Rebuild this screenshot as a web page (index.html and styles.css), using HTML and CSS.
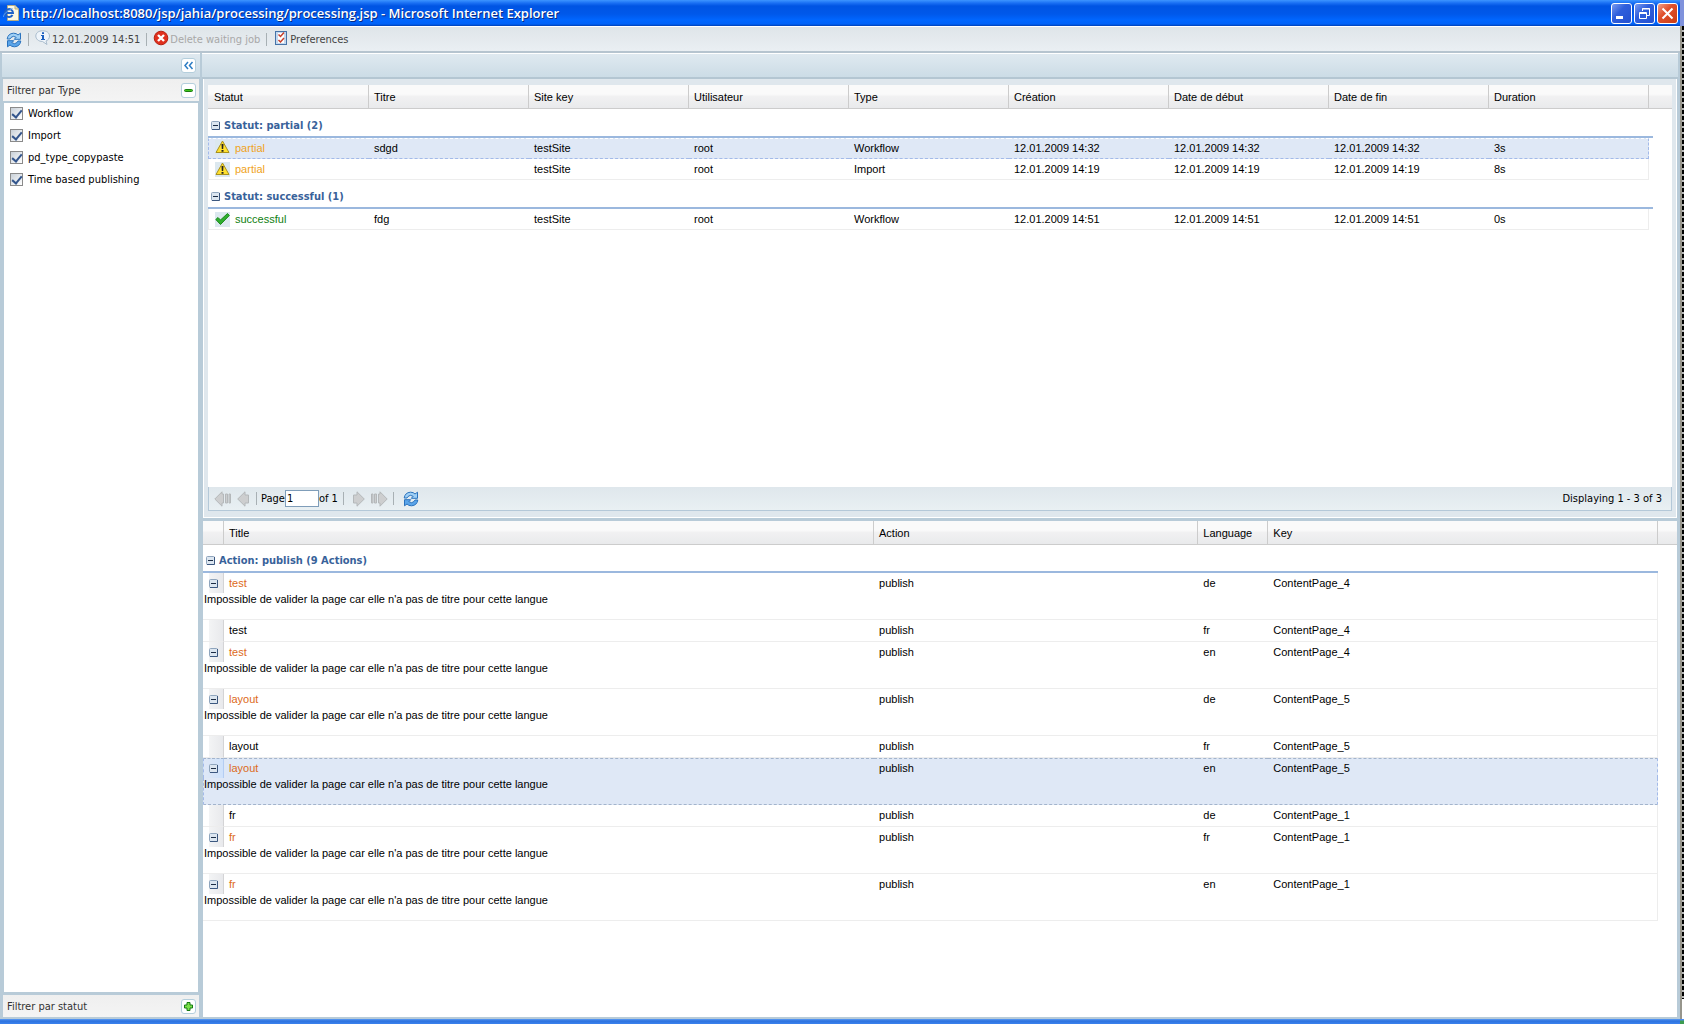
FILE: index.html
```html
<!DOCTYPE html>
<html lang="fr">
<head>
<meta charset="utf-8">
<title>Processing</title>
<link rel="stylesheet" href="styles.css">
</head>
<body>
<svg class="defs" aria-hidden="true">
  <symbol id="refresh" viewBox="0 0 16 16">
    <path d="M1.200 7 Q2 1.500 7.500 1.200 Q10.500 1.200 12 3 L14.500 1.200 V7.300 H8.300 L10.200 5.300 Q7 3.200 5 5.500 L4 7 Z" fill="#9fd0f6" stroke="#2a72bd"/>
    <path d="M14.800 9 Q14 14.500 8.500 14.800 Q5.500 14.800 4 13 L1.500 14.800 V8.700 H7.700 L5.800 10.700 Q9 12.800 11 10.500 L12 9 Z" fill="#5aa5ea" stroke="#2a72bd"/>
  </symbol>
  <symbol id="warn" viewBox="0 0 15 15">
    <path d="M7.500 1 L14 12.500 H1 Z" fill="#ffe02e" stroke="#a8901c" stroke-linejoin="round"/>
    <path d="M6.500 4 H8.500 L8.200 9 H6.800 Z M6.500 10 H8.500 V11.800 H6.500 Z" fill="#222"/>
  </symbol>
  <symbol id="check" viewBox="0 0 15 15">
    <path d="M.8 7.500 L3 5.500 L5.500 8 L12.500 1.500 L14.300 3.500 L5.500 12.500 Z" fill="#2fae2f" stroke="#1a8a1a" stroke-linejoin="round"/>
  </symbol>
  <symbol id="minus" viewBox="0 0 9 9">
    <rect x=".5" y=".5" width="8" height="8" rx="1" fill="#dce6f0" stroke="#8fa5bd"/>
    <path d="M1 8.500 H8.500 V1" fill="none" stroke="#3c5880"/>
    <path d="M2 4.500 H7" stroke="#1c2c44"/>
  </symbol>
  <symbol id="arrow" viewBox="0 0 12 16">
    <path d="M.5 4 H4 V.8 L11.300 8 L4 15.200 V12 H.5 Z" fill="#cdcecf" stroke="#b4b8ba"/>
  </symbol>
  <symbol id="arrow-end" viewBox="0 0 17 16">
    <path d="M.5 3 H2 V12 H.5 Z M3.500 3 H5.500 V12 H3.500 Z M7.500 3 H9 V.8 L16.200 8 L9 15.200 V12 H7.500 Z" fill="#cdcecf" stroke="#b4b8ba"/>
  </symbol>
</svg>
<div class="screen">
  <div class="window">
    <header class="titlebar">
      <svg class="ie" width="16" height="16" viewBox="0 0 16 16"><path d="M4.500 .5 H12 L15.500 4 V15.500 H4.500 Z" fill="#fbf8e4" stroke="#b8ad84"/><path d="M12 .5 V4 H15.500" fill="#e4dcb4" stroke="#b8ad84"/><path d="M9.500 10 A4 4 0 1 1 10 8 H3.500" fill="none" stroke="#1f62c8" stroke-width="2"/><path d="M.5 12 Q0 8 9.500 3.500" fill="none" stroke="#5a9cf0"/></svg>
      <h1>http://localhost:8080/jsp/jahia/processing/processing.jsp - Microsoft Internet Explorer</h1>
      <div class="winbtns">
        <button class="wb" aria-label="Minimize"><svg width="19" height="19"><path d="M4 13.500 H11" stroke="#fff" stroke-width="3"/></svg></button>
        <button class="wb" aria-label="Restore"><svg width="19" height="19" fill="none" stroke="#fff"><path d="M7.500 7 V4.500 H14.500 V11.500 H12 M7 5 H15 M4.500 8.500 H11.500 V14.500 H4.500 Z M4 9.500 H12"/></svg></button>
        <button class="wb close" aria-label="Close"><svg width="19" height="19"><path d="M4.500 4.500 L14.500 14.500 M14.500 4.500 L4.500 14.500" stroke="#fff" stroke-width="2"/></svg></button>
      </div>
    </header>
    <nav class="toolbar">
      <button class="tb" aria-label="Refresh"><svg width="16" height="16"><use href="#refresh"/></svg></button>
      <i class="sep"></i>
      <button class="tb"><svg class="up" width="16" height="16" viewBox="0 0 16 16"><path d="M7.500 .8 C12 .8 14.500 3 14.500 6 C14.500 8.500 13 10.300 11 11 L12 14.500 L7.500 11.500 C3.500 11.500 .8 9 .8 6 C.8 3 3.500 .8 7.500 .8 Z" fill="#eef4fa" stroke="#a9bccd"/><path d="M7 2.300 H9 V4 H7 Z M6 5 H9 V9 H10 V10 H6 V9 H7 V6 H6 Z" fill="#1c5fc0"/></svg>12.01.2009 14:51</button>
      <i class="sep"></i>
      <button class="tb off" disabled><svg class="up" width="16" height="16" viewBox="0 0 16 16"><circle cx="8" cy="8" r="6.800" fill="#e0301e" stroke="#b52212"/><path d="M5 5 L11 11 M11 5 L5 11" stroke="#fff" stroke-width="2.400"/></svg>Delete waiting job</button>
      <i class="sep"></i>
      <button class="tb"><svg class="up" width="16" height="16" viewBox="0 0 16 16"><rect x="2.500" y="1.500" width="11" height="13" fill="#c4d8ee" stroke="#4673a8"/><rect x="5" y="3" width="6" height="10" fill="#fff"/><path d="M5.500 4.500 L7.500 6.500 L11 2.500 M5.500 10 L7.500 12 L11 8" fill="none" stroke="#c6402c" stroke-width="1.500"/></svg>Preferences</button>
    </nav>
    <div class="workspace">
      <aside class="side">
        <div class="strip"><button class="tool" aria-label="Collapse"><svg width="13" height="13" fill="none" stroke="#2b7cc4" stroke-width="1.500"><path d="M6 3 L3 6.500 L6 10 M10.500 3 L7.500 6.500 L10.500 10"/></svg></button></div>
        <div class="sidebody">
          <div class="acc"><h2>Filtrer par Type</h2><button class="tool" aria-label="Collapse"><svg width="13" height="13"><rect x="2.500" y="5.500" width="8" height="2" rx="1" fill="#3fc41c" stroke="#1a7d10"/></svg></button></div>
          <form class="filters">
            <label><input type="checkbox" checked>Workflow</label>
            <label><input type="checkbox" checked>Import</label>
            <label><input type="checkbox" checked>pd_type_copypaste</label>
            <label><input type="checkbox" checked>Time based publishing</label>
          </form>
          <div class="acc"><h2>Filtrer par statut</h2><button class="tool" aria-label="Expand"><svg width="13" height="13"><path d="M5 2.500 H8 V5 H10.500 V8 H8 V10.500 H5 V8 H2.500 V5 H5 Z" fill="#7be04a" stroke="#157a10"/></svg></button></div>
        </div>
      </aside>
      <main class="main">
        <div class="strip"></div>
        <div class="panels">
          <section class="upper">
            <div class="scroll">
              <table class="grid jobs">
                <colgroup><col class="c-first"><col span="8"><col class="c-fill"></colgroup>
                <thead><tr><th>Statut</th><th>Titre</th><th>Site key</th><th>Utilisateur</th><th>Type</th><th>Création</th><th>Date de début</th><th>Date de fin</th><th>Duration</th><td class="fill"></td></tr></thead>
                <tbody>
                  <tr class="group"><th colspan="10"><div><svg width="9" height="9"><use href="#minus"/></svg>Statut: partial (2)</div></th></tr>
                  <tr class="row sel"><td class="partial"><span><svg width="15" height="15"><use href="#warn"/></svg>partial</span></td><td>sdgd</td><td>testSite</td><td>root</td><td>Workflow</td><td>12.01.2009 14:32</td><td>12.01.2009 14:32</td><td>12.01.2009 14:32</td><td>3s</td></tr>
                  <tr class="row"><td class="partial"><span><svg width="15" height="15"><use href="#warn"/></svg>partial</span></td><td></td><td>testSite</td><td>root</td><td>Import</td><td>12.01.2009 14:19</td><td>12.01.2009 14:19</td><td>12.01.2009 14:19</td><td>8s</td></tr>
                </tbody>
                <tbody>
                  <tr class="group"><th colspan="10"><div><svg width="9" height="9"><use href="#minus"/></svg>Statut: successful (1)</div></th></tr>
                  <tr class="row"><td class="ok"><span><svg width="15" height="15"><use href="#check"/></svg>successful</span></td><td>fdg</td><td>testSite</td><td>root</td><td>Workflow</td><td>12.01.2009 14:51</td><td>12.01.2009 14:51</td><td>12.01.2009 14:51</td><td>0s</td></tr>
                </tbody>
              </table>
            </div>
            <div class="pager">
              <button class="pg flip" aria-label="First page" disabled><svg width="17" height="16"><use href="#arrow-end"/></svg></button>
              <button class="pg flip" aria-label="Previous page" disabled><svg width="12" height="16"><use href="#arrow"/></svg></button>
              <i class="sep"></i>
              <label>Page<input type="text" value="1"></label><span>of 1</span>
              <i class="sep near"></i>
              <button class="pg" aria-label="Next page" disabled><svg width="12" height="16"><use href="#arrow"/></svg></button>
              <button class="pg" aria-label="Last page" disabled><svg width="17" height="16"><use href="#arrow-end"/></svg></button>
              <i class="sep near"></i>
              <button class="pg" aria-label="Refresh"><svg width="16" height="16"><use href="#refresh"/></svg></button>
              <output>Displaying 1 - 3 of 3</output>
            </div>
          </section>
          <section class="lower">
            <table class="grid actions">
              <colgroup><col class="c-exp"><col class="c-title"><col class="c-action"><col class="c-lang"><col><col class="c-end"></colgroup>
              <thead><tr><th></th><th>Title</th><th>Action</th><th>Language</th><th>Key</th><td class="fill"></td></tr></thead>
              <tbody>
                <tr class="group"><th colspan="5"><div><svg width="9" height="9"><use href="#minus"/></svg>Action: publish (9 Actions)</div></th></tr>
                <tr class="top"><td class="exp"><svg width="9" height="9"><use href="#minus"/></svg></td><td class="err">test</td><td>publish</td><td>de</td><td>ContentPage_4</td></tr>
                <tr class="msg"><td colspan="5">Impossible de valider la page car elle n'a pas de titre pour cette langue</td></tr>
                <tr class="plain"><td class="exp"></td><td>test</td><td>publish</td><td>fr</td><td>ContentPage_4</td></tr>
                <tr class="top"><td class="exp"><svg width="9" height="9"><use href="#minus"/></svg></td><td class="err">test</td><td>publish</td><td>en</td><td>ContentPage_4</td></tr>
                <tr class="msg"><td colspan="5">Impossible de valider la page car elle n'a pas de titre pour cette langue</td></tr>
                <tr class="top"><td class="exp"><svg width="9" height="9"><use href="#minus"/></svg></td><td class="err">layout</td><td>publish</td><td>de</td><td>ContentPage_5</td></tr>
                <tr class="msg"><td colspan="5">Impossible de valider la page car elle n'a pas de titre pour cette langue</td></tr>
                <tr class="plain"><td class="exp"></td><td>layout</td><td>publish</td><td>fr</td><td>ContentPage_5</td></tr>
                <tr class="top sel"><td class="exp"><svg width="9" height="9"><use href="#minus"/></svg></td><td class="err">layout</td><td>publish</td><td>en</td><td>ContentPage_5</td></tr>
                <tr class="msg sel"><td colspan="5">Impossible de valider la page car elle n'a pas de titre pour cette langue</td></tr>
                <tr class="plain"><td class="exp"></td><td>fr</td><td>publish</td><td>de</td><td>ContentPage_1</td></tr>
                <tr class="top"><td class="exp"><svg width="9" height="9"><use href="#minus"/></svg></td><td class="err">fr</td><td>publish</td><td>fr</td><td>ContentPage_1</td></tr>
                <tr class="msg"><td colspan="5">Impossible de valider la page car elle n'a pas de titre pour cette langue</td></tr>
                <tr class="top"><td class="exp"><svg width="9" height="9"><use href="#minus"/></svg></td><td class="err">fr</td><td>publish</td><td>en</td><td>ContentPage_1</td></tr>
                <tr class="msg"><td colspan="5">Impossible de valider la page car elle n'a pas de titre pour cette langue</td></tr>
              </tbody>
            </table>
          </section>
        </div>
      </main>
    </div>
  </div>
  <div class="behind"><div class="b-title"></div><div class="b-dots"></div><div class="b-corner"></div></div>
  <div class="taskbar"></div><div class="taskbar tray"></div>
</div>
</body>
</html>
```
FILE: styles.css
```css
:root {
  --frame: #b8cbd8;
  --ui: "DejaVu Sans Condensed", "Noto Sans", sans-serif;
}
* { box-sizing: border-box; }
body {
  margin: 0;
  background: var(--frame);
  font: 11px/14px "Liberation Sans", Arial, sans-serif;
  color: #000;
}
button { border: 0; padding: 0; background: none; font: inherit; color: inherit; }
svg { display: block; flex: none; }
.defs { display: none; }

.screen {
  display: grid;
  grid-template-columns: minmax(0, 1fr) 4px;
  grid-template-rows: minmax(0, 1fr) 5px;
  height: 100vh;
}
.window { display: flex; flex-direction: column; min-height: 0; }
.taskbar { background: linear-gradient(#5c9cf4, #2d72de 2px, #3a82ee); }
.taskbar.tray { background: linear-gradient(#4a8cf0 1px, #3d9c50 2px); }

/* title bar */
.titlebar {
  display: flex;
  align-items: center;
  gap: 3px;
  height: 26px;
  padding: 0 2px 0 3px;
  background: linear-gradient(#3d95ff, #1a70f4 3px, #0054e3 6px, #0058ea 14px, #0066ff 20px, #0062f8 24px, #003fb4);
}
.titlebar h1 {
  flex: 1;
  margin: 0;
  font: 600 13px/18px "Open Sans", "Noto Sans", sans-serif;
  color: #fff;
  text-shadow: 1px 1px #0a2a80;
  white-space: nowrap;
}
.winbtns { display: flex; gap: 2px; }
.wb {
  width: 21px;
  height: 21px;
  border: 1px solid #fff;
  border-radius: 3px;
  background: linear-gradient(135deg, #7c9cf0, #2f5fdc 40%, #2450d0);
}
.wb.close { background: linear-gradient(135deg, #f0a088, #e0502c 40%, #c83c14); }

/* toolbar */
.toolbar {
  display: flex;
  align-items: center;
  height: 27px;
  padding: 1px 6px 0;
  background: linear-gradient(#dfe5e9, #eaeff3);
  border-top: 1px solid #fff;
  border-bottom: 2px solid #b6c4cf;
  font-family: var(--ui);
  color: #444;
}
.tb { display: flex; align-items: center; gap: 1px; }
.tb .up { margin-bottom: 4px; }
.tb.off { color: #a8a8a8; }
.sep { width: 1px; height: 13px; margin: 0 6px; background: #a8b0b4; }

/* workspace */
.workspace {
  flex: 1;
  display: grid;
  grid-template-columns: 198px minmax(0, 1fr);
  gap: 2px;
  min-height: 0;
  padding: 0 2px;
}
.side, .main { display: flex; flex-direction: column; min-width: 0; min-height: 0; }
.strip {
  display: flex;
  flex: none;
  justify-content: flex-end;
  align-items: center;
  height: 26px;
  padding-right: 4px;
  background: linear-gradient(#dfe9f0, #ccdce6);
  border-top: 1px solid #fff;
  border-bottom: 2px solid #b4c6d2;
}
.tool {
  display: grid;
  place-items: center;
  width: 15px;
  height: 15px;
  border: 1px solid #b4cedc;
  border-radius: 3px;
  background: #fff;
}
.sidebody {
  flex: 1;
  display: flex;
  flex-direction: column;
  padding: 0 1px 2px;
}
.acc {
  display: flex;
  justify-content: space-between;
  align-items: center;
  height: 22px;
  padding: 0 3px 0 4px;
  background: linear-gradient(#efefef, #f4f4f4);
}
.acc h2 { margin: 0; padding-top: 2px; font: 11px/14px var(--ui); color: #333; }
.filters {
  flex: 1;
  margin: 2px 1px 3px;
  background: #fff;
  font-family: var(--ui);
}
.filters label {
  display: flex;
  align-items: center;
  gap: 5px;
  height: 22px;
  padding-left: 6px;
}
.filters input {
  appearance: none;
  display: grid;
  place-items: center;
  width: 13px;
  height: 13px;
  margin: 0 0 2px;
  border: 1px solid #8a8a8a;
  background: linear-gradient(135deg, #c8d0d8, #fff);
}
.filters input:checked::after {
  content: "";
  width: 4px;
  height: 8px;
  margin-bottom: 3px;
  border: solid #33558c;
  border-width: 0 2px 2px 0;
  transform: rotate(40deg);
}

.panels {
  flex: 1;
  display: grid;
  grid-template-rows: minmax(0, 439fr) minmax(0, 496fr);
  gap: 3px;
  min-height: 0;
  padding: 0 1px 2px;
}
.upper {
  display: flex;
  flex-direction: column;
  padding: 6px 4px 6px;
  background: #dfe7ed;
  border: solid #fff;
  border-width: 0 1px 1px;
}
.scroll { flex: 1; background: #fff; }
.lower { background: #fff; }

/* grids */
.grid {
  width: 100%;
  table-layout: fixed;
  border-spacing: 0;
}
.grid th, .grid td { padding: 0 5px; text-align: left; font-weight: normal; white-space: nowrap; }
.grid thead th, .grid thead td {
  height: 24px;
  background: linear-gradient(#fafafa 0 40%, #f1f1f2 50%, #e9eaec);
  border-bottom: 1px solid #ccc;
}
.grid thead th { border-right: 1px solid #ccc; }
.jobs thead th:first-child { padding-left: 6px; }
.grid .group th { height: 29px; padding: 0; vertical-align: bottom; }
.actions .group th { height: 28px; }
.grid .group div {
  display: flex;
  align-items: center;
  gap: 4px;
  height: 23px;
  padding: 0 0 0 3px;
  border-bottom: 2px solid #9bb8de;
  font: bold 11px/14px var(--ui);
  color: #38629a;
}
.c-first { width: 161px; }
.c-fill { width: 23px; }
.jobs .group div { margin-right: 19px; }
.row td { height: 21px; border-bottom: 1px solid #ededed; }
.row td:first-child { padding-left: 6px; border-left: 1px solid #ededed; }
.row td:last-child { border-right: 1px solid #ededed; }
.row span { display: flex; align-items: center; gap: 5px; }
.row svg { background: #dce8ef; }
.partial { color: #f0a31c; }
.ok { color: #108010; }
.row.sel td { padding-bottom: 2px; background: #dfe8f6; border-top: 1px dashed #fff; border-bottom: 1px dashed #a3bae9; }
.row.sel td:first-child { border-left: 1px dashed #a3bae9; }
.row.sel td:last-child { border-right: 1px dashed #a3bae9; }

.c-exp { width: 21px; }
.c-title { width: 44.1%; }
.c-action { width: 22%; }
.c-lang { width: 70px; }
.c-end { width: 19px; }
.actions .exp {
  padding: 1px 0 0 6px;
  background: linear-gradient(90deg, transparent 6px, #f3f4f5 6px, #e8e9ec);
  border-right: 1px solid #d4d4d6;
}
.actions .top td { height: 20px; }
.actions .plain td { height: 22px; padding-bottom: 2px; border-bottom: 1px solid #ededed; }
.actions .msg td {
  height: 27px;
  padding: 0 1px;
  vertical-align: top;
  line-height: 13px;
  border-bottom: 1px solid #ededed;
}
.actions tr td:last-child { border-right: 1px solid #ededed; }
.actions thead tr td:last-child { border-right: 0; }
.actions .err { color: #dd6a20; }
.actions .sel td { background-color: #dfe8f6; }
.actions .top.sel td { padding-bottom: 1px; border-top: 1px dashed #a3b4cc; }
.actions .top.sel .exp { padding-left: 5px; background-image: linear-gradient(90deg, #dfe8f6, #cfe2fb); border-right-color: #b4cdf2; }
.actions .msg.sel td { padding-left: 0; border-bottom: 1px dashed #a3b4cc; }
.actions .sel td:first-child { border-left: 1px dashed #a3bae9; }
.actions .sel td:last-child { border-right: 1px dashed #a3bae9; }

/* pager */
.pager {
  display: flex;
  align-items: center;
  height: 24px;
  padding: 0 9px 0 5px;
  background: linear-gradient(#dfe7ec, #e9f0f3);
  border: solid #b4c8d8;
  border-width: 0 1px 1px;
  font-family: var(--ui);
}
.pager .sep { margin: 0 4px 0 7px; }
.pager .sep.near { margin: 0 3px 0 5px; }
.pg + .pg { margin-left: 6px; }
.pager .sep + .pg { margin-left: 6px; }
.pg.flip svg { transform: scaleX(-1); }
.pager label { display: flex; align-items: center; }
.pager input {
  width: 34px;
  height: 17px;
  padding: 0 1px;
  border: 1px solid #7f9db9;
  background: #fff;
  font: inherit;
}
.pager output { margin-left: auto; }

/* window showing behind the right edge */
.behind { display: flex; flex-direction: column; }
.b-title { height: 26px; background: #7f92dc; }
.b-dots {
  flex: 1;
  border-left: 2px solid #96958c;
  background: repeating-linear-gradient(#000 0 4px, #b8b8b8 4px 6px);
}
.b-corner { height: 20px; border-left: 2px solid #96958c; background: #fff; }
```
